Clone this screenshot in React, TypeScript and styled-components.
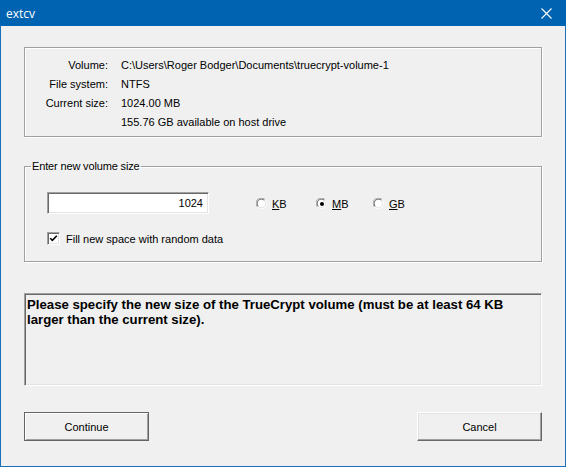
import React from 'react'
import styled, { createGlobalStyle } from 'styled-components'

const GlobalStyle = createGlobalStyle`
  html, body {
    margin: 0;
    padding: 0;
    background: #f0f0f0;
  }
  * {
    box-sizing: border-box;
  }
`

const Window = styled.div`
  width: 566px;
  height: 467px;
  display: flex;
  flex-direction: column;
  background: #f0f0f0;
  border: 1px solid #1a6fbb;
  border-top: none;
  font-family: 'Liberation Sans', Arial, sans-serif;
  font-size: 11px;
  color: #000;
`

const TitleBar = styled.div`
  height: 26px;
  margin: 0 -1px;
  padding: 0 10px 0 6px;
  display: flex;
  align-items: center;
  justify-content: space-between;
  background: #0063b1;
  color: #fff;
  font-family: 'Open Sans', 'Noto Sans', sans-serif;
  font-size: 12px;
`

const CloseIcon = styled.svg`
  width: 11px;
  height: 11px;
  margin-right: 4px;
`

const Body = styled.div`
  flex: 1;
  display: flex;
  flex-direction: column;
  padding: 21px 23px 0 23px;
`

const InfoBox = styled.div`
  height: 90px;
  border: 1px solid #a0a0a0;
  box-shadow: 1px 1px 0 #fff, inset 1px 1px 0 #fff;
  padding: 7px 0 0 0;
  display: grid;
  grid-template-columns: 83px 1fr;
  grid-auto-rows: 19px;
  column-gap: 13px;
  align-items: center;
`

const InfoLabel = styled.div`
  text-align: right;
`

const InfoValue = styled.div`
  white-space: nowrap;
`

const GroupBox = styled.fieldset`
  margin: 23px 0 0 0;
  padding: 0;
  min-width: 0;
  height: 102px;
  border: 1px solid #a0a0a0;
  box-shadow: 1px 1px 0 #fff, inset 1px 1px 0 #fff;
`

const GroupLegend = styled.legend`
  margin-left: 6px;
  padding: 0 1px;
  line-height: 13px;
  letter-spacing: -0.15px;
`

const SizeRow = styled.div`
  display: flex;
  align-items: center;
  margin: 19px 0 0 22px;
`

const SizeInput = styled.div`
  width: 162px;
  height: 22px;
  background: #fff;
  border-style: solid;
  border-width: 1px;
  border-color: #a0a0a0 #fff #fff #a0a0a0;
  box-shadow: inset 1px 1px 0 #696969, inset -1px -1px 0 #e3e3e3;
  display: flex;
  align-items: center;
  justify-content: flex-end;
  padding-right: 5px;
`

const UnitGroup = styled.div`
  display: flex;
  align-items: center;
  margin: 2px 0 0 47px;
`

const RadioItem = styled.label<{ $width: number }>`
  display: flex;
  align-items: center;
  width: ${p => p.$width}px;
  gap: 4px;
`

const CheckRow = styled.label`
  display: flex;
  align-items: center;
  gap: 6px;
  margin: 18px 0 0 22px;
`

const CheckBoxSquare = styled.span`
  width: 13px;
  height: 13px;
  background: #fff;
  border-style: solid;
  border-width: 1px;
  border-color: #a0a0a0 #fff #fff #a0a0a0;
  box-shadow: inset 1px 1px 0 #696969, inset -1px -1px 0 #e3e3e3;
  display: flex;
  align-items: center;
  justify-content: center;
`

const MessageBox = styled.div`
  margin-top: 31px;
  height: 93px;
  border-style: solid;
  border-width: 1px;
  border-color: #a0a0a0 #fff #fff #a0a0a0;
  box-shadow: inset 1px 1px 0 #696969, inset -1px -1px 0 #e3e3e3;
  padding: 3px 3px 0 2px;
  font-family: Arial, 'Liberation Sans', sans-serif;
  font-weight: 700;
  font-size: 13.2px;
  line-height: 15px;
`

const ButtonRow = styled.div`
  margin-top: 26px;
  display: flex;
  justify-content: space-between;
`

const DialogButton = styled.button<{ $default?: boolean }>`
  width: 125px;
  height: 29px;
  padding: 0;
  background: #f0f0f0;
  font-family: 'Liberation Sans', Arial, sans-serif;
  font-size: 11px;
  color: #000;
  border-style: solid;
  border-width: 1px;
  border-color: ${p => (p.$default ? '#646464' : '#fff #696969 #696969 #fff')};
  box-shadow: ${p =>
    p.$default
      ? 'inset 1px 1px 0 #fff, inset -1px -1px 0 #a0a0a0'
      : 'inset -1px -1px 0 #a0a0a0, inset 1px 1px 0 #e3e3e3'};
`

const Radio = ({ checked }: { checked?: boolean }) => (
  <svg width="12" height="12" viewBox="0 0 12 12">
    <path d="M1.5 9 A5 5 0 0 1 9 1.5" fill="none" stroke="#a0a0a0" strokeWidth="1" />
    <path d="M9 1.5 A5 5 0 0 1 1.5 9" fill="none" stroke="#fff" strokeWidth="1" />
    <circle cx="6" cy="6" r="4.5" fill="#fff" />
    <path d="M2.4 8.5 A4 4 0 0 1 8.5 2.4" fill="none" stroke="#696969" strokeWidth="1" />
    <path d="M8.5 2.4 A4 4 0 0 1 2.4 8.5" fill="none" stroke="#e3e3e3" strokeWidth="1" />
    {checked && <circle cx="6" cy="6" r="2" fill="#000" />}
  </svg>
)

export default function App() {
  return (
    <>
      <GlobalStyle />
      <Window>
        <TitleBar>
          <span>extcv</span>
          <CloseIcon viewBox="0 0 11 11">
            <path d="M0.5 0.5 L10.5 10.5 M10.5 0.5 L0.5 10.5" stroke="#fff" strokeWidth="1.1" />
          </CloseIcon>
        </TitleBar>
        <Body>
          <InfoBox>
            <InfoLabel>Volume:</InfoLabel>
            <InfoValue>C:\Users\Roger Bodger\Documents\truecrypt-volume-1</InfoValue>
            <InfoLabel>File system:</InfoLabel>
            <InfoValue>NTFS</InfoValue>
            <InfoLabel>Current size:</InfoLabel>
            <InfoValue>1024.00 MB</InfoValue>
            <InfoLabel />
            <InfoValue>155.76 GB available on host drive</InfoValue>
          </InfoBox>

          <GroupBox>
            <GroupLegend>Enter new volume size</GroupLegend>
            <SizeRow>
              <SizeInput>1024</SizeInput>
              <UnitGroup>
                <RadioItem $width={60}>
                  <Radio />
                  <span><u>K</u>B</span>
                </RadioItem>
                <RadioItem $width={57}>
                  <Radio checked />
                  <span><u>M</u>B</span>
                </RadioItem>
                <RadioItem $width={40}>
                  <Radio />
                  <span><u>G</u>B</span>
                </RadioItem>
              </UnitGroup>
            </SizeRow>
            <CheckRow>
              <CheckBoxSquare>
                <svg width="9" height="9" viewBox="0 0 9 9">
                  <path d="M1.2 4.2 L3.4 6.4 L7.8 1.8" fill="none" stroke="#000" strokeWidth="1.6" />
                </svg>
              </CheckBoxSquare>
              <span>Fill new space with random data</span>
            </CheckRow>
          </GroupBox>

          <MessageBox>
            Please specify the new size of the TrueCrypt volume (must be at least 64 KB larger than the current size).
          </MessageBox>

          <ButtonRow>
            <DialogButton $default>Continue</DialogButton>
            <DialogButton>Cancel</DialogButton>
          </ButtonRow>
        </Body>
      </Window>
    </>
  )
}
